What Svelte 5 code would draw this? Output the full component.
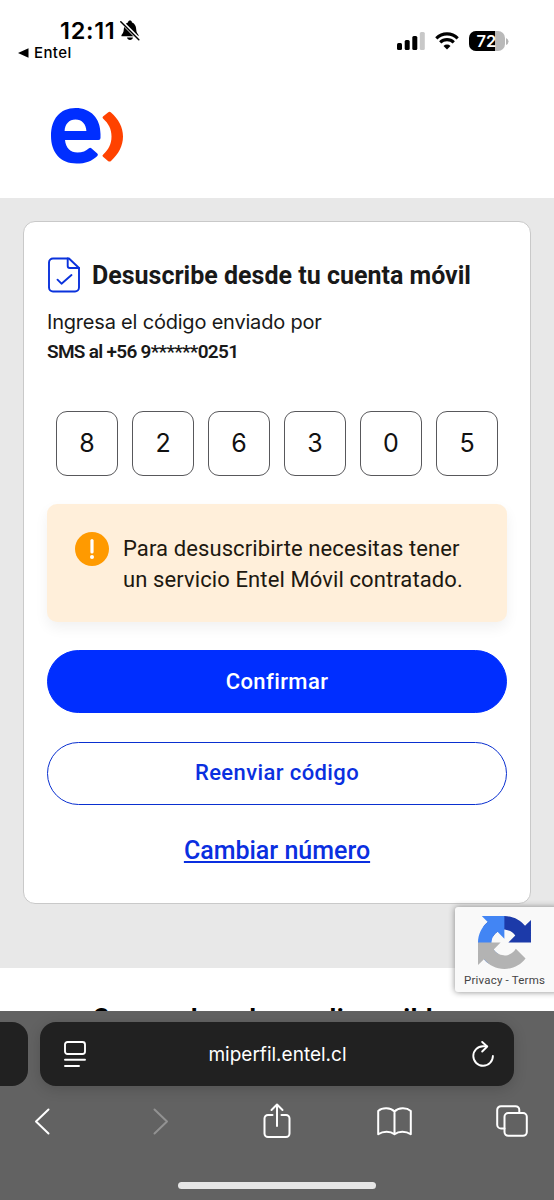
<script lang="ts">
  let code = ['8', '2', '6', '3', '0', '5'];
  let phone = '+56 9******0251';
  let battery = 72;
</script>

<div class="screen">
  <!-- Status bar -->
  <div class="status-bar">
    <div class="status-left">
      <div class="clock">
        <span class="time">12:11</span>
        <svg class="bell" width="20" height="21" viewBox="0 0 20 21">
          <path d="M1.5 16.2c-.5-1 .5-1.7 1.4-3.1 1-1.7.8-4.3 1.3-6.3C4.9 4.2 6.3 2.9 8 2.4 8.2 1 9 .4 10 .4s1.8.6 2 2c1.7.5 3.1 1.8 3.8 4.4.5 2 .3 4.6 1.3 6.3.9 1.4 1.9 2.1 1.4 3.1z" />
          <path d="M7 17.6h6c-.3 1.5-1.5 2.4-3 2.4s-2.7-.9-3-2.4z" />
          <path d="M1.5 1.7 19 19.4" stroke="#fff" stroke-width="3.6" />
          <path d="M.8 1.8 18.8 19.8" stroke="#000" stroke-width="1.5" stroke-linecap="round" />
        </svg>
      </div>
      <div class="back-app">
        <svg width="11" height="10" viewBox="0 0 11 10"><path d="M0 5 10.5 .2v9.6z" /></svg>
        <span>Entel</span>
      </div>
    </div>
    <div class="status-right">
      <svg width="28" height="18" viewBox="0 0 28 18">
        <rect x="0" y="11" width="5" height="7" rx="1.5" />
        <rect x="7.7" y="8" width="5" height="10" rx="1.5" />
        <rect x="15.3" y="4" width="5" height="14" rx="1.5" />
        <rect x="22.8" y="0" width="5" height="18" rx="1.5" fill="#c8c8c8" />
      </svg>
      <svg class="wifi" width="24" height="18" viewBox="0 0 24 18" fill="none" stroke="#000" stroke-width="3.1">
        <path d="M1.3 6.3a15.2 15.2 0 0 1 21.4 0" />
        <path d="M5.2 10.4a9.7 9.7 0 0 1 13.6 0" />
        <path d="M12 17.6 8.5 14a5 5 0 0 1 7 0z" fill="#000" stroke="none" />
      </svg>
      <div class="battery">
        <div class="battery-fill" style="width: {battery}%"></div>
        <span>{battery}</span>
      </div>
      <svg class="battery-tip" width="3" height="7" viewBox="0 0 3 7"><path d="M0 0q2.500 1 2.500 3.500T0 7z" fill="#b5b5b5" /></svg>
    </div>
  </div>

  <!-- Logo -->
  <header class="header">
    <svg width="74" height="58" viewBox="0 0 74 58">
      <path fill="#002eff" fill-rule="evenodd" d="M25.5 1C41 1 50.5 11.5 50.5 27v4q0 2-2 2H15c.7 8 5.5 12.5 12.5 12.5 5 0 8.5-1.5 11.5-4.3q1.2-1 2.3 0l6 5.3q1.3 1.2 0 2.4C42 54 35.5 56.5 26.5 56.5 10.5 56.5 1 45.5 1 29 1 12 10 1 25.5 1zM14.6 24h21.8C36 17 32 12.5 25.5 12.5S15 17 14.6 24z" />
      <path fill="#ff4200" d="M53 11.5q-1-1 0-1.9l5-4.2q1.6-1.2 3 0C68.5 12 73 20 73 29.5S68.5 47 61 54q-1.5 1.2-3 0l-5-4.2q-1.2-1 0-2.1C58.5 42.5 61.5 37 61.5 29.5S58.5 16.5 53 11.5z" />
    </svg>
  </header>

  <main class="content">
    <section class="card">
      <div class="card-title">
        <svg width="34" height="36" viewBox="0 0 34 36" fill="none" stroke="#0a32dc" stroke-width="1.9" stroke-linecap="round" stroke-linejoin="round">
          <path d="M6 1.5h16L32 11v19.5a4 4 0 0 1-4 4H6a4 4 0 0 1-4-4v-25a4 4 0 0 1 4-4z" />
          <path d="M20.7 1.5v7.5q0 2 2 2H32" />
          <path d="m10.5 22.7 4 4L24.5 18" />
        </svg>
        <h1>Desuscribe desde tu cuenta móvil</h1>
      </div>
      <p class="lead">Ingresa el código enviado por</p>
      <p class="phone">SMS al {phone}</p>

      <div class="code">
        {#each code as digit}
          <div class="digit">{digit}</div>
        {/each}
      </div>

      <div class="alert">
        <svg width="34" height="34" viewBox="0 0 34 34">
          <circle cx="17" cy="17" r="17" fill="#ff9a00" />
          <path d="M17 8.5v11.5" stroke="#fff" stroke-width="3.2" stroke-linecap="round" />
          <circle cx="17" cy="25" r="2" fill="#fff" />
        </svg>
        <p>Para desuscribirte necesitas tener<br />un servicio Entel Móvil contratado.</p>
      </div>

      <button class="btn primary">Confirmar</button>
      <button class="btn outline">Reenviar código</button>
      <a class="link" href="#numero">Cambiar número</a>
    </section>
  </main>

  <section class="next">
    <h2>Conoce los planes disponibles</h2>
  </section>

  <!-- reCAPTCHA badge -->
  <div class="recaptcha">
    <svg width="53" height="53" viewBox="0 0 64 64">
      <path fill="#1c3aa9" d="M64 31.955l-.033-1.37V4.687l-7.16 7.16C50.948 4.674 42.033.093 32.05.093c-10.4 0-19.622 4.96-25.458 12.64l11.736 11.86a15.55 15.55 0 0 1 4.754-5.334c2.05-1.6 4.952-2.906 8.968-2.906.485 0 .86.057 1.135.163 4.976.393 9.288 3.14 11.828 7.124l-8.307 8.307L64 31.953" />
      <path fill="#4285f4" d="M31.862.094l-1.37.033H4.594l7.16 7.16C4.58 13.147 0 22.06 0 32.046c0 10.4 4.96 19.622 12.64 25.458L24.5 45.768a15.55 15.55 0 0 1-5.334-4.754c-1.6-2.05-2.906-4.952-2.906-8.968 0-.485.057-.86.163-1.135.393-4.976 3.14-9.288 7.124-11.828l8.307 8.307L31.86.095" />
      <path fill="#b3b3b3" d="M.001 32.045l.033 1.37v25.898l7.16-7.16c5.86 7.173 14.774 11.754 24.76 11.754 10.4 0 19.622-4.96 25.458-12.64l-11.736-11.86a15.55 15.55 0 0 1-4.754 5.334c-2.05 1.6-4.952 2.906-8.968 2.906-.485 0-.86-.057-1.135-.163-4.976-.393-9.288-3.14-11.828-7.124l8.307-8.307c-10.522.04-22.4.066-27.295-.005" />
    </svg>
    <span>Privacy - Terms</span>
  </div>

  <!-- Browser chrome -->
  <footer class="browser">
    <div class="address-row">
      <div class="prev-tab"></div>
      <div class="address">
        <svg width="22" height="27" viewBox="0 0 22 27" fill="none" stroke="#fff" stroke-width="1.9" stroke-linecap="round">
          <rect x="1" y="1" width="20" height="12" rx="2.5" />
          <path d="M1 18.8h20M1 25h14" />
        </svg>
        <span>miperfil.entel.cl</span>
        <svg width="22" height="26" viewBox="0 0 22 26" fill="none" stroke="#fff" stroke-width="1.9" stroke-linecap="round" stroke-linejoin="round">
          <path d="M14.5 5.2H11a9.8 9.8 0 1 0 9.9 9.8" />
          <path d="m10.2 1 5 4.500-5 5" />
        </svg>
      </div>
    </div>
    <nav class="toolbar">
      <svg width="16" height="27" viewBox="0 0 16 27"><path d="M14.5 1.5 2 13.5l12.5 12" /></svg>
      <svg class="disabled" width="16" height="27" viewBox="0 0 16 27"><path d="M1.5 1.5 14 13.5l-12.5 12" /></svg>
      <svg width="28" height="36" viewBox="0 0 28 36">
        <path d="M9.5 12H5a3.5 3.5 0 0 0-3.5 3.5v15A3.5 3.5 0 0 0 5 34h18a3.5 3.5 0 0 0 3.5-3.5v-15A3.5 3.5 0 0 0 23 12h-4.5" />
        <path d="M14 23V1.5M8.5 7 14 1.5 19.5 7" />
      </svg>
      <svg width="35" height="29" viewBox="0 0 35 29">
        <path d="M17.5 4.5C13.5 .5 5.5 .3 1.2 4v23.3c5-3.5 12-3.5 16.3 0 4.3-3.5 11.3-3.5 16.3 0V4C29.5 .3 21.5 .5 17.5 4.5zV27" />
      </svg>
      <svg width="32" height="32" viewBox="0 0 32 32">
        <path d="M8.5 23.5H5A3.8 3.8 0 0 1 1.2 19.7V5A3.8 3.8 0 0 1 5 1.2h14.5A3.8 3.8 0 0 1 23.3 5v3" />
        <rect x="8.5" y="8" width="22.3" height="22.8" rx="3.8" />
      </svg>
    </nav>
    <div class="home-indicator"></div>
  </footer>
</div>

<style>
  :global(body) {
    margin: 0;
    background: #fff;
  }
  .screen {
    position: relative;
    width: 554px;
    height: 1200px;
    overflow: hidden;
    display: flex;
    flex-direction: column;
    background: #fff;
    font-family: Roboto, "Liberation Sans", sans-serif;
    color: #191919;
  }
  svg {
    display: block;
    flex: none;
  }
  h1, h2, p {
    margin: 0;
    white-space: nowrap;
  }

  /* Status bar */
  .status-bar {
    height: 70px;
    display: flex;
    justify-content: space-between;
    box-sizing: border-box;
    padding: 17px 45px 0 18px;
    font-family: Inter, sans-serif;
    color: #000;
  }
  .clock {
    display: flex;
    align-items: center;
    height: 27px;
    padding-left: 42px;
    gap: 5px;
  }
  .time {
    font-size: 23.5px;
    font-weight: 600;
    letter-spacing: 0.7px;
  }
  .back-app {
    display: flex;
    align-items: center;
    gap: 5px;
    height: 17px;
    font-size: 15px;
    font-weight: 500;
    letter-spacing: 0.4px;
  }
  .status-right {
    display: flex;
    align-items: center;
    height: 48px;
  }
  .wifi {
    margin: 0 10px 0 10px;
  }
  .battery {
    position: relative;
    width: 36px;
    height: 20px;
    border-radius: 7px;
    background: #b9b9b9;
    overflow: hidden;
    text-align: center;
  }
  .battery-fill {
    height: 100%;
    background: #000;
  }
  .battery span {
    position: absolute;
    inset: 0;
    color: #fff;
    font-size: 16.5px;
    font-weight: 600;
    line-height: 20px;
    text-indent: -1px;
  }
  .battery-tip {
    margin-left: 1px;
  }

  .header {
    height: 128px;
    box-sizing: border-box;
    padding: 37px 0 0 50px;
  }

  /* Card */
  .content {
    height: 770px;
    box-sizing: border-box;
    padding: 23px;
    background: #e8e8e8;
  }
  .card {
    width: 508px;
    height: 683px;
    box-sizing: border-box;
    padding: 35px 23px 0;
    border: 1px solid #c9c9c9;
    border-radius: 12px;
    background: #fff;
    display: flex;
    flex-direction: column;
  }
  .card-title {
    display: flex;
    align-items: center;
    height: 36px;
    gap: 11px;
  }
  h1 {
    font-size: 25px;
    font-weight: 700;
  }
  .lead {
    margin-top: 14px;
    font-family: Inter, sans-serif;
    font-size: 20px;
    line-height: 30px;
    letter-spacing: -0.2px;
  }
  .phone {
    font-size: 19px;
    font-weight: 600;
    line-height: 30px;
    letter-spacing: -0.7px;
  }
  .code {
    display: flex;
    gap: 14px;
    margin: 44px 0 0 9px;
  }
  .digit {
    width: 62px;
    height: 65px;
    box-sizing: border-box;
    border: 1px solid #58585b;
    border-radius: 11px;
    font-family: Inter, sans-serif;
    font-size: 25px;
    line-height: 63px;
    text-align: center;
    color: #111;
  }
  .alert {
    display: flex;
    gap: 14px;
    height: 118px;
    margin-top: 28px;
    box-sizing: border-box;
    padding: 28px 0 0 28px;
    border-radius: 10px;
    background: #ffefda;
    box-shadow: 0 6px 14px rgba(0, 0, 0, 0.06);
  }
  .alert p {
    padding-top: 1px;
    font-size: 22px;
    font-weight: 450;
    line-height: 31px;
    letter-spacing: 0.1px;
    color: #201810;
  }
  .btn {
    height: 63px;
    flex: none;
    padding: 0;
    border: 1px solid #002eff;
    border-radius: 32px;
    font-family: inherit;
    font-size: 22px;
    font-weight: 500;
    letter-spacing: 0.4px;
  }
  .primary {
    margin-top: 28px;
    background: #002eff;
    color: #fff;
  }
  .outline {
    margin-top: 29px;
    padding-bottom: 2px;
    border-color: #0a30d0;
    background: #fff;
    color: #0a2fe0;
  }
  .link {
    align-self: center;
    margin-top: 30px;
    font-size: 25px;
    font-weight: 500;
    line-height: 32px;
    color: #0a2fe0;
    text-underline-offset: 2px;
    text-decoration-thickness: 2px;
  }

  .next {
    height: 43px;
    padding-top: 32px;
    box-sizing: border-box;
    text-align: center;
  }
  h2 {
    font-size: 26px;
    font-weight: 700;
    line-height: 36px;
    letter-spacing: 0.5px;
    color: #000;
  }

  .recaptcha {
    position: absolute;
    top: 907px;
    right: -6px;
    width: 105px;
    height: 85px;
    border-radius: 3px;
    background: #f9f9f9;
    box-shadow: 0 0 6px #888;
    font-size: 11.5px;
    letter-spacing: 0.2px;
    color: #444;
  }
  .recaptcha svg {
    margin: 9px 0 0 23px;
  }
  .recaptcha span {
    display: block;
    margin: 4px 0 0 9px;
    line-height: 15px;
  }

  /* Browser chrome */
  .browser {
    position: relative;
    height: 189px;
    background: #626262;
  }
  .address-row {
    display: flex;
    gap: 12px;
    padding-top: 11px;
  }
  .prev-tab {
    width: 28px;
    height: 64px;
    border-radius: 0 16px 16px 0;
    background: #212121;
  }
  .address {
    width: 474px;
    height: 64px;
    box-sizing: border-box;
    padding: 0 20px 0 24px;
    display: flex;
    align-items: center;
    justify-content: space-between;
    border-radius: 16px;
    background: #212121;
    box-shadow: 0 3px 14px rgba(0, 0, 0, 0.16);
    font-family: Inter, sans-serif;
    font-size: 19px;
    color: #fff;
  }
  .address span {
    margin-right: 3px;
  }
  .toolbar {
    display: grid;
    grid-template-columns: repeat(5, 1fr);
    align-items: center;
    justify-items: center;
    height: 36px;
    margin: 17px -17px 0;
  }
  .toolbar svg {
    fill: none;
    stroke: #fff;
    stroke-width: 2;
    stroke-linecap: round;
    stroke-linejoin: round;
  }
  .toolbar .disabled {
    margin-left: 4px;
    stroke: #929292;
  }
  .home-indicator {
    width: 198px;
    height: 7px;
    margin: 43px auto 0;
    border-radius: 4px;
    background: #e6e6e6;
  }
</style>
